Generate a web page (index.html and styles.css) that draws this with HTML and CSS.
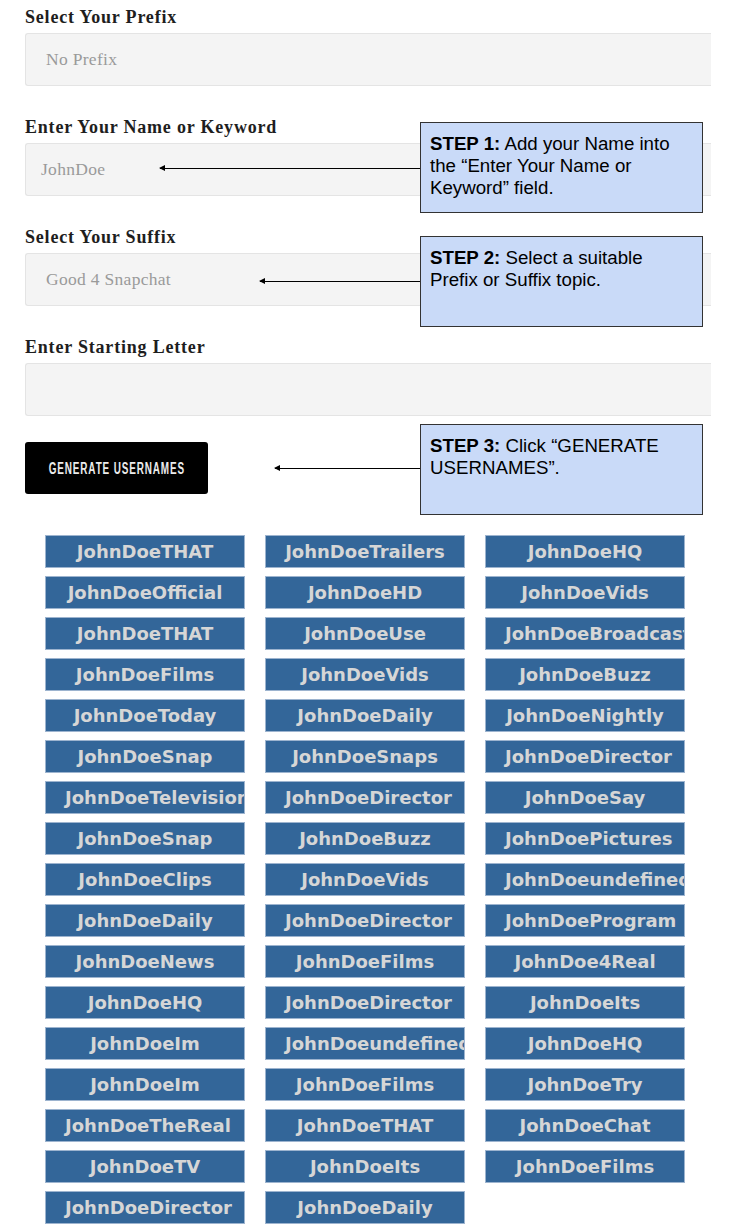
FILE: index.html
```html
<!DOCTYPE html>
<html>
<head>
<meta charset="utf-8">
<link rel="stylesheet" href="styles.css">
</head>
<body>
<div class="page">
  <div class="form">
    <label class="label">Select Your Prefix</label>
    <div class="input">No Prefix</div>
    <label class="label">Enter Your Name or Keyword</label>
    <div class="input input-name">JohnDoe</div>
    <label class="label">Select Your Suffix</label>
    <div class="input">Good 4 Snapchat</div>
    <label class="label">Enter Starting Letter</label>
    <div class="input"></div>
    <button class="generate"><span class="generate-text">GENERATE USERNAMES</span></button>
  </div>

  <div class="results">
    <div class="name">JohnDoeTHAT</div><div class="name">JohnDoeTrailers</div><div class="name">JohnDoeHQ</div>
    <div class="name">JohnDoeOfficial</div><div class="name">JohnDoeHD</div><div class="name">JohnDoeVids</div>
    <div class="name">JohnDoeTHAT</div><div class="name">JohnDoeUse</div><div class="name">JohnDoeBroadcast</div>
    <div class="name">JohnDoeFilms</div><div class="name">JohnDoeVids</div><div class="name">JohnDoeBuzz</div>
    <div class="name">JohnDoeToday</div><div class="name">JohnDoeDaily</div><div class="name">JohnDoeNightly</div>
    <div class="name">JohnDoeSnap</div><div class="name">JohnDoeSnaps</div><div class="name">JohnDoeDirector</div>
    <div class="name">JohnDoeTelevision</div><div class="name">JohnDoeDirector</div><div class="name">JohnDoeSay</div>
    <div class="name">JohnDoeSnap</div><div class="name">JohnDoeBuzz</div><div class="name">JohnDoePictures</div>
    <div class="name">JohnDoeClips</div><div class="name">JohnDoeVids</div><div class="name">JohnDoeundefined</div>
    <div class="name">JohnDoeDaily</div><div class="name">JohnDoeDirector</div><div class="name">JohnDoeProgram</div>
    <div class="name">JohnDoeNews</div><div class="name">JohnDoeFilms</div><div class="name">JohnDoe4Real</div>
    <div class="name">JohnDoeHQ</div><div class="name">JohnDoeDirector</div><div class="name">JohnDoeIts</div>
    <div class="name">JohnDoeIm</div><div class="name">JohnDoeundefined</div><div class="name">JohnDoeHQ</div>
    <div class="name">JohnDoeIm</div><div class="name">JohnDoeFilms</div><div class="name">JohnDoeTry</div>
    <div class="name">JohnDoeTheReal</div><div class="name">JohnDoeTHAT</div><div class="name">JohnDoeChat</div>
    <div class="name">JohnDoeTV</div><div class="name">JohnDoeIts</div><div class="name">JohnDoeFilms</div>
    <div class="name">JohnDoeDirector</div><div class="name">JohnDoeDaily</div>
  </div>

  <div class="arrow arrow-1"></div>
  <div class="callout callout-1"><b>STEP 1:</b> Add your Name into the “Enter Your Name or Keyword” field.</div>

  <div class="arrow arrow-2"></div>
  <div class="callout callout-2"><b>STEP 2:</b> Select a suitable Prefix or Suffix topic.</div>

  <div class="arrow arrow-3"></div>
  <div class="callout callout-3"><b>STEP 3:</b> Click “GENERATE USERNAMES”.</div>
</div>
</body>
</html>
```

FILE: styles.css
```css
html, body {
  margin: 0;
  padding: 0;
  background: #ffffff;
}

.page {
  position: relative;
  width: 731px;
  height: 1228px;
  overflow: hidden;
}

.form {
  display: flex;
  flex-direction: column;
  align-items: flex-start;
  padding: 7px 0 0 25px;
}

.label {
  display: block;
  font-family: "Liberation Serif", "DejaVu Serif", serif;
  font-weight: bold;
  font-size: 18px;
  letter-spacing: 0.8px;
  line-height: 20px;
  color: #1e1e1e;
  margin-bottom: 6px;
}

.input {
  box-sizing: border-box;
  width: 686px;
  height: 53px;
  background: #f4f4f4;
  border: 1px solid #e4e4e4;
  border-right: none;
  border-radius: 3px 0 0 3px;
  margin-bottom: 31px;
  padding: 0 20px;
  display: flex;
  align-items: center;
  font-family: "Liberation Serif", "DejaVu Serif", serif;
  font-size: 17.5px;
  letter-spacing: 0.3px;
  color: #9a9a9a;
}

.input-name {
  padding-left: 15px;
}

.form .input:last-of-type {
  margin-bottom: 26px;
}

.generate {
  box-sizing: border-box;
  width: 183px;
  height: 52px;
  background: #000000;
  color: #ececec;
  border: none;
  border-radius: 3px;
  padding: 2px 0 0 0;
  margin: 0;
  display: flex;
  align-items: center;
  justify-content: center;
}

.generate-text {
  display: inline-block;
  font-family: "Liberation Sans", Arial, sans-serif;
  font-weight: bold;
  font-size: 16px;
  letter-spacing: 1.4px;
  white-space: nowrap;
  transform: scaleX(0.62);
}

.results {
  display: grid;
  grid-template-columns: repeat(3, 200px);
  column-gap: 20px;
  row-gap: 8px;
  margin: 41px 0 0 45px;
}

.name {
  box-sizing: border-box;
  height: 33px;
  background: #336699;
  border: 1px solid #9db4cf;
  padding: 0 19px;
  overflow: hidden;
  white-space: nowrap;
  text-align: center;
  font-family: "DejaVu Sans", Verdana, sans-serif;
  font-weight: bold;
  font-size: 18px;
  line-height: 31px;
  color: #d6d6d6;
}

.callout {
  position: absolute;
  left: 420px;
  width: 283px;
  height: 91px;
  box-sizing: border-box;
  background: #c9daf8;
  border: 1px solid #333333;
  padding: 10px 20px 10px 9px;
  font-family: "Liberation Sans", Arial, sans-serif;
  font-size: 18.7px;
  line-height: 22px;
  color: #000000;
}

.callout-1 { top: 122px; }
.callout-2 { top: 236px; }
.callout-3 { top: 424px; }

.arrow {
  position: absolute;
  height: 1px;
  background: #000000;
}

.arrow::before {
  content: "";
  position: absolute;
  left: -1px;
  top: -3px;
  border-top: 3.5px solid transparent;
  border-bottom: 3.5px solid transparent;
  border-right: 6px solid #000000;
}

.arrow-1 { top: 168px; left: 160px; width: 260px; }
.arrow-2 { top: 281px; left: 260px; width: 160px; }
.arrow-3 { top: 468px; left: 275px; width: 145px; }
```
